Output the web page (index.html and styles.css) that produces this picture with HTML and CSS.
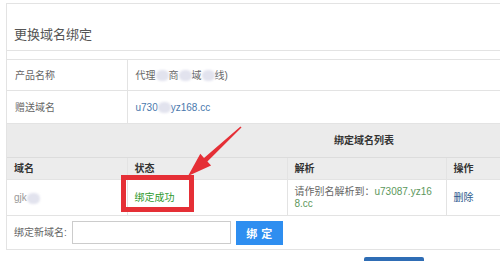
FILE: index.html
```html
<!DOCTYPE html>
<html lang="zh-CN">
<head>
    <meta charset="UTF-8">
    <title>更换域名绑定</title>
    <link rel="stylesheet" href="styles.css">
</head>
<body>
<div class="page">
    <div class="panel">
        <div class="panel-title">更换域名绑定</div>
        <table class="info">
            <colgroup><col class="info-c1"><col></colgroup>
            <tr class="r1">
                <td>产品名称</td>
                <td>代理<span class="blur"></span>商<span class="blur"></span>域<span class="blur"></span>线)</td>
            </tr>
            <tr class="r2">
                <td>赠送域名</td>
                <td><a class="link">u730<span class="blur"></span>yz168.cc</a></td>
            </tr>
        </table>
        <table class="binds">
            <colgroup>
                <col class="c1"><col class="c2"><col class="c3"><col>
            </colgroup>
            <tr class="caption"><th colspan="4">绑定域名列表</th></tr>
            <tr class="head">
                <th>域名</th>
                <th>状态</th>
                <th>解析</th>
                <th>操作</th>
            </tr>
            <tr class="row">
                <td class="muted">gjk<span class="blur"></span></td>
                <td class="ok">绑定成功</td>
                <td class="cname">请作别名解析到：<span class="ok-light">u73087.yz168.cc</span></td>
                <td><a class="del">删除</a></td>
            </tr>
            <tr class="form">
                <td colspan="4">
                    <div class="form-line">
                        <span>绑定新域名:</span>
                        <input type="text" class="domain-input">
                        <button class="btn-bind">绑定</button>
                    </div>
                </td>
            </tr>
        </table>
    </div>
    <div class="more"><button class="btn-dark"></button></div>

    <!-- annotation drawn over the screenshot -->
    <svg class="mark" width="500" height="261" viewBox="0 0 500 261">
        <rect x="123.5" y="177.5" width="68" height="32" fill="none" stroke="#e52f36" stroke-width="5"/>
        <polygon fill="#e52f36" points="240.5,126.4 204,157.9 200.3,153.8 188,176 211.1,165.6 207.4,161.5 241.5,127.6"/>
    </svg>
</div>
</body>
</html>
```

FILE: styles.css
```css
body {
    margin: 0;
    background: #fff;
    font-family: "Liberation Sans", "Noto Sans CJK SC", sans-serif;
    font-size: 10px;
    color: #666;
    overflow: hidden;
}
.page {
    position: relative;
    box-sizing: border-box;
    width: 500px;
    height: 261px;
    overflow: hidden;
    padding: 3px 0 0 6px;
}
.panel {
    width: 714px;
    border: 1px solid #e3e3e3;
}
.panel-title {
    height: 47px;
    box-sizing: border-box;
    padding: 0 0 6px 7px;
    display: flex;
    align-items: flex-end;
    font-size: 13px;
    line-height: 18px;
    color: #555;
    border-bottom: 1px solid #e3e3e3;
    margin-bottom: 8px;
}
table {
    width: 100%;
    border-collapse: collapse;
    table-layout: fixed;
}
td, th {
    padding: 0 7px;
    line-height: 13px;
    text-align: left;
}
.info {
    border-top: 1px solid #e3e3e3;
}
.info-c1 { width: 120px; }
.info td {
    padding: 0 8px;
    border-bottom: 1px solid #e3e3e3;
}
.info td + td {
    border-left: 1px solid #e3e3e3;
}
.info .r1 td { height: 30px; }
.info .r2 td { height: 32px; }
.link {
    color: #4a78ad;
}
.blur {
    display: inline-block;
    width: 13px;
    height: 11px;
    background: #e2e3ee;
    border-radius: 6px;
    filter: blur(1.2px);
    vertical-align: middle;
}
.c1 { width: 120px; }
.c2 { width: 160px; }
.c3 { width: 159px; }
.binds .caption th {
    height: 33px;
    background: #ebebeb;
    text-align: center;
    color: #333;
    font-size: 10px;
    border-bottom: 1px solid #dcdcdc;
}
.binds .head th {
    height: 21px;
    background: #ececec;
    color: #333;
    border-bottom: 1px solid #e3e3e3;
}
.binds .head th + th,
.binds .row td + td {
    border-left: 1px solid #e3e3e3;
}
.binds .row td {
    height: 35px;
    border-bottom: 1px solid #e3e3e3;
}
.cname {
    word-break: break-all;
    padding-right: 12px;
    line-height: 12px;
}
.muted { color: #999; }
.ok { color: #2f9a2f; }
.ok-light { color: #5c975c; }
.del { color: #2c5a8c; }
.binds .form td {
    height: 33px;
    padding: 0 7px;
}
.form-line {
    display: flex;
    align-items: center;
    gap: 5px;
    color: #666;
}
.domain-input {
    width: 159px;
    height: 23px;
    box-sizing: border-box;
    border: 1px solid #ccc;
    margin: 0;
}
.btn-bind {
    width: 47px;
    height: 24px;
    border: 0;
    background: #2e8ef0;
    color: #fff;
    font-family: inherit;
    font-size: 11px;
    font-weight: bold;
    letter-spacing: 4px;
    padding: 0 0 0 4px;
}
.more {
    padding: 7px 0 0 358px;
}
.btn-dark {
    display: block;
    width: 60px;
    height: 20px;
    border: 0;
    border-radius: 2px;
    background: #2f6db5;
}
.mark {
    position: absolute;
    top: 0;
    left: 0;
    pointer-events: none;
}
```
